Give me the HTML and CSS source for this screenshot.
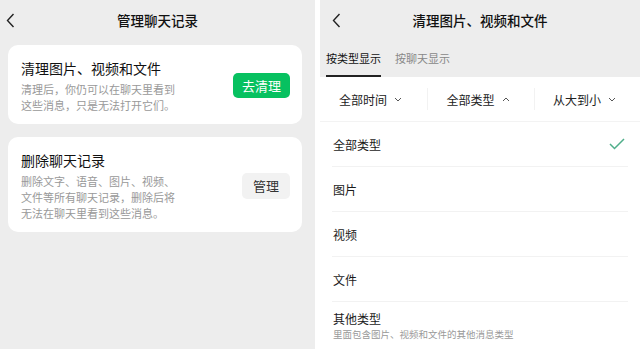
FILE: index.html
```html
<!DOCTYPE html>
<html lang="zh-CN">
  <head>
    <meta charset="UTF-8" />
    <meta name="viewport" content="width=device-width, initial-scale=1.0" />
    <title>管理聊天记录</title>
    <link rel="stylesheet" href="styles.css">
  </head>

  <body>
    <div class="screens">
      <div class="screen screen-left">
        <div class="nav">
          <span class="back">
            <svg width="9" height="15" viewBox="0 0 9 15"><path d="M7.5 1 L1.5 7.5 L7.5 14" fill="none" stroke="#222" stroke-width="1.4" /></svg>
          </span>
          <span class="nav-title">管理聊天记录</span>
        </div>

        <div class="cards">
          <div class="card">
            <div class="card-text">
              <div class="card-title">清理图片、视频和文件</div>
              <p class="card-desc">清理后，你仍可以在聊天里看到<br />这些消息，只是无法打开它们。</p>
            </div>
            <button class="btn btn-green">去清理</button>
          </div>

          <div class="card">
            <div class="card-text">
              <div class="card-title">删除聊天记录</div>
              <p class="card-desc">删除文字、语音、图片、视频、<br />文件等所有聊天记录，删除后将<br />无法在聊天里看到这些消息。</p>
            </div>
            <button class="btn btn-grey">管理</button>
          </div>
        </div>
      </div>

      <div class="screen screen-right">
        <div class="top">
          <div class="nav">
            <span class="back">
              <svg width="9" height="15" viewBox="0 0 9 15"><path d="M7.5 1 L1.5 7.5 L7.5 14" fill="none" stroke="#222" stroke-width="1.4" /></svg>
            </span>
            <span class="nav-title">清理图片、视频和文件</span>
          </div>
          <div class="tabs">
            <span class="tab active">按类型显示</span>
            <span class="tab">按聊天显示</span>
          </div>
        </div>

        <div class="filters">
          <div class="filter">全部时间
            <svg width="8" height="5" viewBox="0 0 8 5"><path d="M1 1 L4 4 L7 1" fill="none" stroke="#555" stroke-width="1" /></svg>
          </div>
          <div class="filter">全部类型
            <svg width="8" height="5" viewBox="0 0 8 5"><path d="M1 4 L4 1 L7 4" fill="none" stroke="#555" stroke-width="1" /></svg>
          </div>
          <div class="filter">从大到小
            <svg width="8" height="5" viewBox="0 0 8 5"><path d="M1 1 L4 4 L7 1" fill="none" stroke="#555" stroke-width="1" /></svg>
          </div>
        </div>

        <ul class="types">
          <li class="type">
            <span>全部类型</span>
            <svg class="check" width="16" height="12" viewBox="0 0 16 12"><path d="M1 6 L5.5 10.5 L15 1" fill="none" stroke="#4fae8a" stroke-width="1.5" /></svg>
          </li>
          <li class="type">图片</li>
          <li class="type">视频</li>
          <li class="type">文件</li>
          <li class="type type-other">
            <span>其他类型</span>
            <small>里面包含图片、视频和文件的其他消息类型</small>
          </li>
        </ul>
      </div>
    </div>
  </body>
</html>
```

FILE: styles.css
```css
* {
  margin: 0;
  padding: 0;
  box-sizing: border-box;
  font-family: "Noto Sans CJK SC", "Noto Sans CJK TC", "Noto Sans CJK JP", sans-serif;
}

body {
  background: #ffffff;
  color: #1a1a1a;
  overflow: hidden;
}

.screens {
  display: grid;
  grid-template-columns: 315px 320px;
  column-gap: 5px;
  height: 349px;
}

.screen {
  height: 349px;
  overflow: hidden;
}

.screen-left {
  background: #ededed;
}

.screen-right {
  background: #ffffff;
}

.nav {
  height: 40px;
  display: flex;
  align-items: center;
  justify-content: center;
  position: relative;
}

.back {
  position: absolute;
  left: 6px;
  top: 13px;
  display: flex;
}

.screen-right .back {
  left: 12px;
}

.nav-title {
  font-size: 13.5px;
  font-weight: 500;
  color: #111;
}

.cards {
  padding: 5px 13px 0 8px;
  display: flex;
  flex-direction: column;
  gap: 13px;
}

.card {
  background: #ffffff;
  border-radius: 10px;
  padding: 13px 12px 11px 13px;
  display: flex;
  align-items: center;
  justify-content: space-between;
}

.card-title {
  font-size: 14px;
  line-height: 20px;
  color: #111;
}

.card-desc {
  margin-top: 3px;
  font-size: 11px;
  line-height: 16px;
  color: #999;
}

.btn {
  border: none;
  border-radius: 5px;
  font-size: 13px;
  height: 25px;
  cursor: pointer;
}

.btn-green {
  width: 57px;
  background: #07c160;
  color: #ffffff;
}

.btn-grey {
  width: 48px;
  height: 26px;
  background: #f2f2f2;
  color: #333;
}

.top {
  background: #ededed;
}

.tabs {
  display: flex;
  gap: 14px;
  padding-left: 6px;
  height: 37px;
  align-items: flex-end;
}

.tab {
  font-size: 11px;
  line-height: 16px;
  padding: 10px 0 9px;
  color: #888;
  border-bottom: 2px solid transparent;
}

.tab.active {
  color: #111;
  border-bottom-color: #222;
}

.filters {
  height: 45px;
  display: grid;
  grid-template-columns: 107px 107px 106px;
  align-items: center;
  border-bottom: 1px solid #f3f3f3;
}

.filter {
  font-size: 12px;
  color: #222;
  display: flex;
  align-items: center;
  justify-content: center;
  gap: 7px;
  padding-right: 6px;
  border-left: 1px solid #f2f2f2;
  height: 22px;
}

.filter:first-child {
  border-left: none;
}

.types {
  list-style: none;
  padding: 0 12px;
}

.type {
  height: 45px;
  display: flex;
  align-items: center;
  justify-content: space-between;
  padding: 0 3px 0 1px;
  font-size: 12px;
  color: #1a1a1a;
  border-bottom: 1px solid #f2f2f2;
}

.type-other {
  flex-direction: column;
  align-items: flex-start;
  justify-content: flex-start;
  padding-top: 9px;
  border-bottom: none;
}

.type-other span {
  line-height: 16px;
}

.type-other small {
  font-size: 9.5px;
  line-height: 15px;
  color: #999;
}
```
